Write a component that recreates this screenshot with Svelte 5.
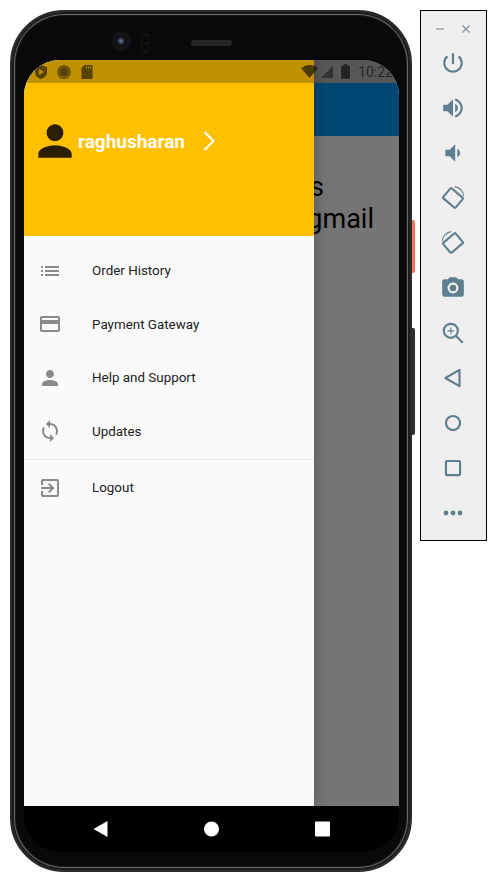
<script>
  const person = 'M12 12c2.21 0 4-1.79 4-4s-1.79-4-4-4-4 1.79-4 4 1.79 4 4 4zm0 2c-2.67 0-8 1.34-8 4v2h16v-2c0-2.66-5.33-4-8-4z';

  const menu = [
    { label: 'Order History', d: 'M3 13h2v-2H3v2zm0 4h2v-2H3v2zm0-8h2V7H3v2zm4 4h14v-2H7v2zm0 4h14v-2H7v2zM7 7v2h14V7H7z' },
    { label: 'Payment Gateway', d: 'M20 4H4c-1.11 0-1.99.89-1.99 2L2 18c0 1.11.89 2 2 2h16c1.11 0 2-.89 2-2V6c0-1.11-.89-2-2-2zm0 14H4v-6h16v6zm0-10H4V6h16v2z' },
    { label: 'Help and Support', d: person },
    { label: 'Updates', d: 'M12 4V1L8 5l4 4V6c3.31 0 6 2.69 6 6 0 1.01-.25 1.97-.7 2.8l1.46 1.46C19.54 15.03 20 13.57 20 12c0-4.42-3.58-8-8-8zm0 14c-3.31 0-6-2.69-6-6 0-1.01.25-1.97.7-2.8L5.24 7.74C4.46 8.97 4 10.43 4 12c0 4.42 3.58 8 8 8v3l4-4-4-4v3z' }
  ];
  const logout = 'M10.09 15.59L11.5 17l5-5-5-5-1.41 1.41L12.67 11H3v2h9.67l-2.58 2.59zM19 3H5c-1.11 0-2 .9-2 2v4h2V5h14v14H5v-4H3v4c0 1.1.89 2 2 2h14c1.1 0 2-.9 2-2V5c0-1.1-.9-2-2-2z';
</script>

<div class="page">
  <div class="phone">
    <span class="key orange"></span>
    <span class="key power"></span>

    <div class="bezel-top">
      <span class="camera"><i></i></span>
      <span class="sensors"><i></i><i></i></span>
      <span class="speaker"></span>
    </div>

    <div class="screen">
      <div class="app">
        <div class="appbar"></div>
        <div class="content">
          <div class="line first">Your address</div>
          <div class="line second">raghusharan@gmail</div>
        </div>
      </div>
      <div class="scrim"></div>

      <aside class="drawer">
        <header class="drawer-head">
          <svg class="avatar" viewBox="0 0 24 24"><path d={person} /></svg>
          <span class="name">raghusharan</span>
          <svg class="chevron" viewBox="0 0 12 20"><path d="M1.500 1l9 9-9 9" /></svg>
        </header>
        <nav class="menu">
          {#each menu as item}
            <div class="row">
              <svg viewBox="0 0 24 24"><path d={item.d} /></svg>
              <span>{item.label}</span>
            </div>
          {/each}
          <div class="divider"></div>
          <div class="row logout">
            <svg viewBox="0 0 24 24"><path d={logout} /></svg>
            <span>Logout</span>
          </div>
        </nav>
      </aside>

      <div class="statusbar">
        <div class="status-left">
          <svg viewBox="0 0 16 16"><path d="M8 1l6 2v5c0 3.500-2.600 5.900-6 7-3.400-1.100-6-3.500-6-7V3zM6 5v6l5-3z" fill-rule="evenodd" /></svg>
          <svg viewBox="0 0 16 16"><circle cx="8" cy="8" r="5" /><circle class="ring" cx="8" cy="8" r="6.200" /></svg>
          <svg viewBox="0 0 16 16"><path d="M5.500 1H12.500a1 1 0 0 1 1 1v12a1 1 0 0 1-1 1h-9a1 1 0 0 1-1-1V4zM7 2.500v2h1v-2zm2 0v2h1v-2zm2 0v2h1v-2z" fill-rule="evenodd" /></svg>
        </div>
        <div class="status-right">
          <svg class="wifi" viewBox="0 0 18 14"><path d="M0 3.500C2.500 1.300 5.600 0 9 0s6.500 1.300 9 3.500L9 14z" /></svg>
          <svg class="signal" viewBox="0 0 14 14"><path d="M14 0v14H0z" /></svg>
          <svg class="battery" viewBox="0 0 10 16"><path d="M3 0h4v1.500h2a1 1 0 0 1 1 1V15a1 1 0 0 1-1 1H1a1 1 0 0 1-1-1V2.500a1 1 0 0 1 1-1h2z" /></svg>
          <span class="time">10:22</span>
        </div>
      </div>
    </div>

    <div class="navbar">
      <svg viewBox="0 0 14 16"><path d="M14 0v16L0 8z" /></svg>
      <svg viewBox="0 0 16 16"><circle cx="8" cy="8" r="8" /></svg>
      <svg viewBox="0 0 15 15"><rect width="15" height="15" rx="1" /></svg>
    </div>
  </div>

  <div class="tools">
    <div class="window-btns">
      <svg viewBox="0 0 10 10"><path d="M1 5h8" /></svg>
      <svg viewBox="0 0 10 10"><path d="M1.500 1.500l7 7m0-7l-7 7" /></svg>
    </div>
    <div class="tool"><svg viewBox="0 0 24 24"><path d="M13 3h-2v10h2V3zm4.830 2.170l-1.420 1.420C17.990 7.860 19 9.810 19 12c0 3.870-3.130 7-7 7s-7-3.130-7-7c0-2.190 1.010-4.140 2.580-5.420L6.170 5.170C4.230 6.820 3 9.260 3 12c0 4.970 4.030 9 9 9s9-4.030 9-9c0-2.740-1.230-5.180-3.170-6.830z" /></svg></div>
    <div class="tool"><svg viewBox="0 0 24 24"><path d="M3 9v6h4l5 5V4L7 9H3zm13.500 3c0-1.770-1.020-3.290-2.500-4.030v8.050c1.480-.730 2.500-2.250 2.500-4.020zM14 3.230v2.060c2.890.860 5 3.540 5 6.710s-2.110 5.850-5 6.710v2.060c4.010-.910 7-4.490 7-8.770s-2.990-7.860-7-8.770z" /></svg></div>
    <div class="tool"><svg viewBox="0 0 24 24"><path d="M18.500 12c0-1.770-1.020-3.290-2.500-4.030v8.050c1.480-.730 2.500-2.250 2.500-4.020zM5 9v6h4l5 5V4L9 9H5z" /></svg></div>
    <div class="tool"><svg class="line-icon" viewBox="0 0 24 24"><rect x="4.500" y="6" width="15" height="12" rx="1" transform="rotate(40 12 12)" /><path class="thin" d="M13.500 1.500c4.500.5 8 4 8.500 8.500" /></svg></div>
    <div class="tool"><svg class="line-icon" viewBox="0 0 24 24"><rect x="4.500" y="6" width="15" height="12" rx="1" transform="rotate(-40 12 12)" /><path class="thin" d="M10.500 1.500c-4.500.5-8 4-8.500 8.500" /></svg></div>
    <div class="tool"><svg viewBox="0 0 24 24"><path d="M9 2L7.170 4H4c-1.100 0-2 .9-2 2v12c0 1.100.9 2 2 2h16c1.100 0 2-.9 2-2V6c0-1.100-.9-2-2-2h-3.170L15 2H9zm3 15c-2.760 0-5-2.240-5-5s2.240-5 5-5 5 2.240 5 5-2.240 5-5 5z" /><circle cx="12" cy="12" r="3" /></svg></div>
    <div class="tool"><svg class="line-icon" viewBox="0 0 24 24"><circle cx="10" cy="10" r="6.500" /><path d="M15 15l6 6" /><path class="thin" d="M10 7v6M7 10h6" /></svg></div>
    <div class="tool"><svg class="line-icon" viewBox="0 0 24 24"><path d="M18 4.500v15L5 12z" /></svg></div>
    <div class="tool"><svg class="line-icon" viewBox="0 0 24 24"><circle cx="12" cy="12" r="6.500" /></svg></div>
    <div class="tool"><svg class="line-icon" viewBox="0 0 24 24"><rect x="5.500" y="5.500" width="13" height="13" rx="1" /></svg></div>
    <div class="tool"><svg viewBox="0 0 24 24"><circle cx="5.500" cy="12" r="2.200" /><circle cx="12" cy="12" r="2.200" /><circle cx="18.500" cy="12" r="2.200" /></svg></div>
  </div>
</div>

<style>
  :global(body) {
    background: #fff;
    font-family: Roboto, "Liberation Sans", sans-serif;
  }

  .page {
    display: flex;
    align-items: flex-start;
    gap: 8px;
    padding: 10px 0 0 10px;
  }

  /* device */
  .phone {
    position: relative;
    box-sizing: border-box;
    width: 402px;
    height: 862px;
    padding: 1px 11px 18px 12px;
    display: flex;
    flex-direction: column;
    flex: none;
    background: #09090b;
    border: 2px solid #2b2b2d;
    border-radius: 54px;
    box-shadow: inset 0 0 0 2px #1c1c1e, inset 0 0 0 3px #66666a, inset 0 0 0 4px #1a1a1c;
  }

  .key {
    position: absolute;
    left: 400px;
    width: 3px;
    border-radius: 0 2px 2px 0;
  }
  .orange { top: 208px; height: 53px; background: #e8775d; }
  .power { top: 316px; height: 107px; background: #2f2f31; }

  .bezel-top {
    position: relative;
    height: 47px;
    flex: none;
  }
  .camera {
    position: absolute;
    left: 87px;
    top: 18px;
    width: 20px;
    height: 20px;
    border-radius: 50%;
    background: #141418;
    display: grid;
    place-items: center;
  }
  .camera i {
    width: 8px;
    height: 8px;
    border-radius: 50%;
    background: radial-gradient(circle, #5a6a90 15%, #0a0a10 75%);
  }
  .sensors {
    position: absolute;
    left: 117px;
    top: 20px;
    width: 8px;
    height: 20px;
    border-radius: 4px;
    background: #111113;
    display: flex;
    flex-direction: column;
    align-items: center;
    justify-content: space-evenly;
  }
  .sensors i {
    width: 6px;
    height: 6px;
    border-radius: 50%;
    background: #08080a;
  }
  .speaker {
    position: absolute;
    left: 167px;
    top: 27px;
    width: 41px;
    height: 6px;
    border-radius: 3px;
    background: #262628;
  }

  .screen {
    position: relative;
    flex: 1;
    overflow: hidden;
    border-radius: 36px 36px 0 0;
    background: #fff;
  }

  /* page behind the drawer */
  .app {
    height: 100%;
    display: flex;
    flex-direction: column;
    padding-top: 23px;
    box-sizing: border-box;
  }
  .appbar {
    height: 53px;
    flex: none;
    background: #009dfb;
  }
  .content {
    display: flex;
    flex-direction: column;
    align-items: flex-end;
    padding-top: 35px;
    font-size: 27px;
    line-height: 32px;
    color: #000;
  }
  .first { margin-right: 75px; }
  .second { margin-right: 25px; }

  .scrim {
    position: absolute;
    inset: 0;
    background: rgba(0, 0, 0, 0.54);
  }

  /* drawer */
  .drawer {
    position: absolute;
    left: 0;
    top: 0;
    bottom: 0;
    width: 290px;
    display: flex;
    flex-direction: column;
    background: #fafafa;
    box-shadow: 0 0 14px rgba(0, 0, 0, 0.28);
  }
  .drawer-head {
    box-sizing: border-box;
    height: 176px;
    flex: none;
    padding: 0 0 14px 6px;
    display: flex;
    align-items: center;
    background: #ffc000;
  }
  .avatar {
    width: 50px;
    height: 50px;
    fill: #2a2000;
    flex: none;
  }
  .name {
    margin-left: -2px;
    font-size: 19px;
    font-weight: 700;
    color: #fff;
  }
  .chevron {
    width: 12px;
    height: 20px;
    margin-left: 18px;
    fill: none;
    stroke: #fff;
    stroke-width: 2.2;
  }

  .menu {
    padding-top: 8px;
  }
  .row {
    height: 53.5px;
    padding-left: 14px;
    display: flex;
    align-items: center;
    gap: 30px;
    font-size: 13.4px;
    font-weight: 450;
    color: #212121;
  }
  .row svg {
    width: 24px;
    height: 24px;
    fill: #8a8a8a;
    flex: none;
  }
  .divider {
    height: 1px;
    margin-top: 1px;
    background: #eeeeee;
  }
  .logout {
    height: 55px;
  }

  /* status bar */
  .statusbar {
    position: absolute;
    left: 0;
    right: 0;
    top: 0;
    height: 23px;
    display: flex;
    justify-content: space-between;
    align-items: center;
    background: rgba(0, 0, 0, 0.25);
  }
  .status-left {
    display: flex;
    align-items: center;
    gap: 7px;
    padding-left: 9px;
  }
  .status-left svg {
    width: 16px;
    height: 16px;
    fill: rgba(0, 0, 0, 0.55);
  }
  .status-left .ring {
    fill: none;
    stroke: rgba(0, 0, 0, 0.45);
    stroke-width: 1.5;
  }
  .status-right {
    display: flex;
    align-items: center;
    gap: 3px;
    padding-right: 6px;
  }
  .status-right svg {
    fill: rgba(0, 0, 0, 0.6);
    flex: none;
  }
  .wifi { width: 17px; height: 13px; }
  .signal { width: 12px; height: 12px; opacity: 0.7; }
  .battery { width: 9px; height: 15px; margin-left: 5px; }
  .time {
    margin-left: 5px;
    font-size: 14px;
    color: rgba(0, 0, 0, 0.6);
  }

  .navbar {
    height: 46px;
    flex: none;
    padding: 0 69px;
    display: flex;
    align-items: center;
    justify-content: space-between;
    background: #000;
    border-radius: 0 0 36px 36px;
    fill: #fff;
  }
  .navbar svg {
    width: 15px;
    height: 16px;
  }

  /* emulator toolbar */
  .tools {
    box-sizing: border-box;
    width: 67px;
    height: 531px;
    flex: none;
    padding: 7px 1px 0 0;
    display: flex;
    flex-direction: column;
    align-items: center;
    background: #efefef;
    border: 1px solid #000;
    fill: #5f7f8e;
  }
  .window-btns {
    width: 100%;
    padding: 0 14px;
    box-sizing: border-box;
    height: 22px;
    display: flex;
    justify-content: space-between;
    align-items: center;
  }
  .window-btns svg {
    width: 10px;
    height: 10px;
    fill: none;
    stroke: #7d959f;
    stroke-width: 1.2;
  }
  .tool {
    height: 45.1px;
    display: flex;
    align-items: center;
    justify-content: center;
    flex: none;
  }
  .tool svg {
    width: 26px;
    height: 26px;
  }
  .line-icon {
    fill: none;
    stroke: #5f7f8e;
    stroke-width: 2;
    stroke-linejoin: round;
  }
  .line-icon .thin {
    stroke-width: 1;
  }
</style>
